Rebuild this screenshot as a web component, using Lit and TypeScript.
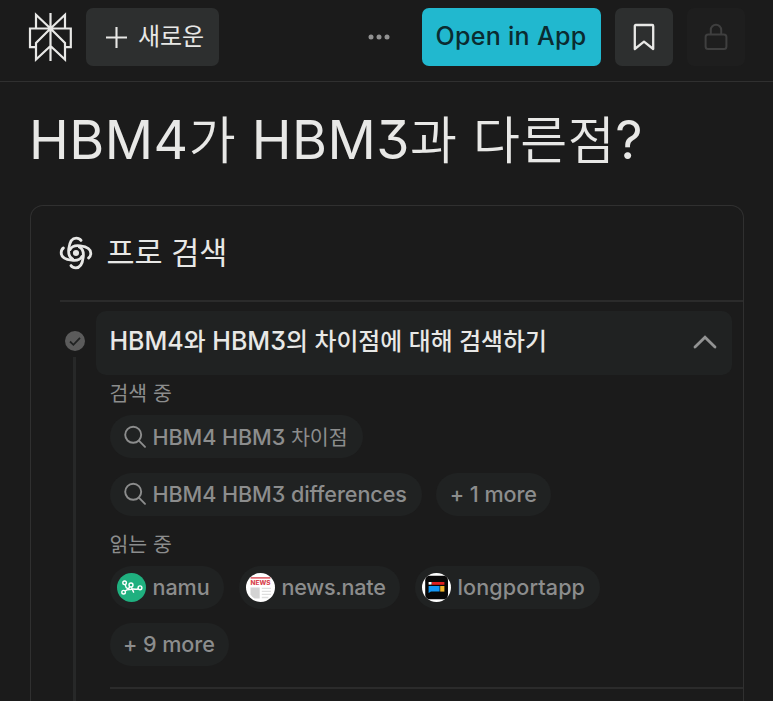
import { LitElement, html, css, svg } from "lit";
import { customElement, property } from "lit/decorators.js";

/* Splits a label into Hangul and Latin runs so each script gets its own face. */
const mix = (text: string) =>
  text
    .split(/([가-힣]+)/)
    .filter((run) => run.length > 0)
    .map((run) => html`<span class=${/[가-힣]/.test(run) ? "ko" : "la"}>${run}</span>`);

const scripts = css`
  .la {
    font-family: Inter, "Liberation Sans", sans-serif;
    letter-spacing: var(--la-gap, 0);
    font-feature-settings: "cv09" 1;
    white-space: pre;
  }
  .ko {
    font-family: "Noto Sans CJK KR", sans-serif;
    font-size: var(--ko-size, 0.95em);
    font-weight: var(--ko-weight, 400);
    letter-spacing: var(--ko-gap, 0);
  }
`;

const searchIcon = svg`<svg width="24" height="24" viewBox="0 0 24 24" fill="none" stroke="#8c8d8d" stroke-width="1.9" stroke-linecap="round">
  <circle cx="10.2" cy="9.8" r="8"/><path d="M15.9 15.6 22 21.8"/></svg>`;

const namuIcon = svg`<svg width="29" height="29" viewBox="0 0 29 29"><circle cx="14.5" cy="14.5" r="14.5" fill="#1fb07f"/>
  <g fill="none" stroke="#fff" stroke-width="1.4"><circle cx="7.6" cy="9.8" r="1.8"/><circle cx="14" cy="12" r="2"/><circle cx="6.6" cy="19.2" r="1.8"/><circle cx="23" cy="14.8" r="1.9"/>
  <path d="M8.2 11.6C9 16 11.4 16.4 12.8 13.8M8.2 18C10.4 15.4 13.2 17 15.4 16.2S19 17.4 21.2 15.6M14.4 14.2 16.8 19.6"/></g></svg>`;

const newsIcon = svg`<svg width="29" height="29" viewBox="0 0 29 29"><circle cx="14.5" cy="14.5" r="14.5" fill="#fff"/>
  <path d="M4.6 4.9H24.4" stroke="#d8454f" stroke-width="1.4"/>
  <text x="14.5" y="11.8" text-anchor="middle" textLength="20" lengthAdjust="spacingAndGlyphs" font-family="Inter, sans-serif" font-size="6.2" font-weight="800" fill="#d8454f">NEWS</text>
  <path d="M4.5 14.5H13.7V25.6H8.6Q5.8 23.6 4.5 21.4Z" fill="#d3d3d3"/>
  <path d="M15.8 15.3H25M15.8 18.3H25M15.8 21.3H25M15.8 24.5H22.4" stroke="#dedede" stroke-width="1.3"/></svg>`;

const longportIcon = svg`<svg width="29" height="29" viewBox="0 0 29 29"><circle cx="14.5" cy="14.5" r="14.5" fill="#fff"/>
  <rect x="3.2" y="2.8" width="22.8" height="23.4" rx="4.5" fill="#080808"/>
  <rect x="6.6" y="9" width="3" height="2.6" fill="#fff"/><rect x="10" y="9" width="12.4" height="2.8" fill="#e02020"/>
  <path d="M6.6 13H17.6V18.6H9L6.6 20Z" fill="#1297f5"/><rect x="18.2" y="13" width="4.2" height="5.6" fill="#f0b429"/></svg>`;

@customElement("query-pill")
class QueryPill extends LitElement {
  @property() label = "";
  @property() kind = "more";
  static styles = [
    scripts,
    css`
      :host {
        display: inline-flex;
        --ko-size: 20.6px;
        --la-gap: -0.08px;
      }
      .pill {
        display: flex;
        align-items: center;
        height: 43px;
        box-sizing: border-box;
        border-radius: 22px;
        background: #202222;
        color: #8c8d8d;
        font: 500 21.6px/43px Inter, sans-serif;
        white-space: nowrap;
      }
      .search { padding: 0 15px 0 13px; gap: 6px; }
      .source { padding: 0 14.5px 0 7px; gap: 7px; }
      .news { --la-gap: -0.28px; }
      .longport { --la-gap: 0.1px; }
      .more { padding: 0 14.5px 0 13.5px; }
      svg { display: block; flex: none; }
    `,
  ];
  render() {
    const icons: Record<string, unknown> = {
      search: searchIcon,
      namu: namuIcon,
      news: newsIcon,
      longport: longportIcon,
      more: "",
    };
    const shape = this.kind === "search" || this.kind === "more" ? "" : "source";
    return html`<div class="pill ${shape} ${this.kind}">${icons[this.kind]}<span>${mix(this.label)}</span></div>`;
  }
}

@customElement("app-root")
class AppRoot extends LitElement {
  static styles = [
    scripts,
    css`
      :host {
        display: flex;
        flex-direction: column;
        height: 701px;
        overflow: hidden;
        background: #1b1b1b;
        color: #e8e8e6;
        font-family: Inter, "Noto Sans CJK KR", sans-serif;
      }
      svg { display: block; flex: none; }
      header {
        display: flex;
        align-items: center;
        height: 82px;
        box-sizing: border-box;
        border-bottom: 1.5px solid #303030;
        padding: 0 28.5px 6.5px 28px;
        flex: none;
      }
      .btn {
        display: flex;
        align-items: center;
        justify-content: center;
        box-sizing: border-box;
        height: 58px;
        border-radius: 7px;
        background: #2d2f2f;
        white-space: nowrap;
      }
      .new {
        width: 133px;
        margin-left: 13px;
        gap: 11px;
        font-size: 24px;
        line-height: 52px;
        --ko-size: 24px;
        padding-left: 5px;
      }
      .new .ko { padding-bottom: 4px; }
      .dots { margin-left: auto; margin-right: 32px; }
      .open {
        width: 179px;
        background: #21b8cf;
        color: #0b2b30;
        font-size: 25px;
        font-weight: 500;
        padding-bottom: 3px;
        --la-gap: 0.3px;
      }
      .square { width: 58px; margin-left: 14px; }
      .muted { background: #1e1e1e; }
      h1 {
        margin: 0;
        padding-left: 29px;
        height: 123px;
        flex: none;
        font-size: 53.5px;
        font-weight: 400;
        line-height: 111px;
        white-space: nowrap;
        --ko-size: 51px;
        --ko-weight: 350;
        --la-gap: 0.5px;
        --ko-gap: 0.5px;
      }
      .card {
        margin: 0 29px 0 29.5px;
        flex: 1;
        display: flex;
        flex-direction: column;
        box-sizing: border-box;
        border: 1.5px solid #303030;
        border-bottom: 0;
        border-radius: 13px 13px 0 0;
        padding-left: 29px;
      }
      .pro {
        display: flex;
        align-items: center;
        gap: 14px;
        height: 96px;
        box-sizing: border-box;
        border-bottom: 2px solid #2b2b2b;
        font-size: 30.5px;
        line-height: 88px;
        --ko-size: 30.5px;
        padding-bottom: 1px;
      }
      .pro svg { margin-left: -1px; }
      .pro span { padding-bottom: 1px; }
      .step { display: flex; flex: 1; padding-top: 9px; }
      .rail {
        width: 30px;
        margin-right: 6px;
        display: flex;
        flex-direction: column;
        align-items: center;
        padding-top: 20px;
        box-sizing: border-box;
      }
      .line { width: 3px; flex: 1; margin-top: 6px; background: #272828; }
      .body { flex: 1; display: flex; flex-direction: column; }
      .head {
        display: flex;
        align-items: center;
        justify-content: space-between;
        height: 64px;
        margin-right: 11px;
        padding: 0 15px 0 14px;
        border-radius: 10px;
        background: #202222;
        font-size: 25px;
        font-weight: 500;
        line-height: 60px;
        white-space: nowrap;
        --ko-size: 23.8px;
        --ko-weight: 450;
      }
      .head .title { padding-bottom: 5px; }
      .head svg { margin-bottom: 3px; }
      .label {
        margin-left: 14px;
        color: #8c8d8d;
        font-size: 20.5px;
        line-height: 30px;
        --ko-size: 20.5px;
      }
      .first { padding: 2px 0 6px; }
      .second { padding: 12px 0 6px; }
      .pills {
        display: flex;
        flex-wrap: wrap;
        gap: 14.5px;
        margin-left: 14px;
        width: 520px;
      }
      .rule { margin: 21px 0 0 14px; height: 2px; background: #2b2b2b; }
    `,
  ];
  render() {
    return html`
      <header>
        <svg width="45" height="50" viewBox="0 0 45 50" fill="none" stroke="#e8e8e6" stroke-width="2.2">
          <path d="M22.5 1V49M22.5 16.5 8 2.8V16.5M22.5 16.5 37 2.8V16.5M8 35.2H2V16.5H42.8V35.2H37M22.5 16.5 8 31V47.5L22.5 34 37 47.5V31Z"/>
        </svg>
        <div class="btn new">
          <svg width="21" height="21" viewBox="0 0 21 21" stroke="#e8e8e6" stroke-width="2.1"><path d="M10.5 0V21M0 10.5H21"/></svg>
          ${mix("새로운")}
        </div>
        <svg class="dots" width="22" height="6" viewBox="0 0 22 6" fill="#929292"><circle cx="3" cy="3" r="2.5"/><circle cx="11" cy="3" r="2.5"/><circle cx="19" cy="3" r="2.5"/></svg>
        <div class="btn open">${mix("Open in App")}</div>
        <div class="btn square">
          <svg width="22" height="28" viewBox="0 0 22 28" fill="none" stroke="#e8e8e6" stroke-width="2.3" stroke-linejoin="round"><path d="M1.8 3Q1.8 2 2.8 2H19.2Q20.2 2 20.2 3V26L11 18.7 1.8 26Z"/></svg>
        </div>
        <div class="btn square muted">
          <svg width="24" height="28" viewBox="0 0 24 28" fill="none" stroke="#3f3f3f" stroke-width="2"><rect x="1.6" y="11.5" width="20.8" height="14.5" rx="2.5"/><path d="M6.8 11.5V7A5.2 5.2 0 0 1 17.2 7V11.5"/></svg>
        </div>
      </header>
      <h1>${mix("HBM4가 HBM3과 다른점?")}</h1>
      <section class="card">
        <div class="pro">
          <svg width="34" height="34" viewBox="-17 -17 34 34" fill="none" stroke="#e8e8e6" stroke-width="2.8" stroke-linecap="round">
            <circle r="3.1" fill="#e8e8e6" stroke="none"/>
            ${[0, 90, 180, 270].map((a) => svg`<path transform="rotate(${a})" d="M-3.4 6C-6.6 4.4-7.8 0.5-7.2-4.2-6.6-9.4-4.4-14.8 0.2-14.8 2.4-14.8 4-14 5-12.6"/>`)}
          </svg>
          <span>${mix("프로 검색")}</span>
        </div>
        <div class="step">
          <div class="rail">
            <svg width="20" height="20" viewBox="0 0 20 20"><circle cx="10" cy="10" r="10" fill="#5b5b5b"/><path d="M5 10.5 8.4 13.8 15 6.8" fill="none" stroke="#202222" stroke-width="1.8"/></svg>
            <div class="line"></div>
          </div>
          <div class="body">
            <div class="head">
              <span class="title">${mix("HBM4와 HBM3의 차이점에 대해 검색하기")}</span>
              <svg width="24" height="14" viewBox="0 0 24 14" fill="none" stroke="#929393" stroke-width="2.8" stroke-linecap="round"><path d="M2 12 12 2.2 22 12"/></svg>
            </div>
            <div class="label first">${mix("검색 중")}</div>
            <div class="pills">
              <query-pill kind="search" label="HBM4 HBM3 차이점"></query-pill>
              <query-pill kind="search" label="HBM4 HBM3 differences"></query-pill>
              <query-pill label="+ 1 more"></query-pill>
            </div>
            <div class="label second">${mix("읽는 중")}</div>
            <div class="pills">
              <query-pill kind="namu" label="namu"></query-pill>
              <query-pill kind="news" label="news.nate"></query-pill>
              <query-pill kind="longport" label="longportapp"></query-pill>
              <query-pill label="+ 9 more"></query-pill>
            </div>
            <div class="rule"></div>
          </div>
        </div>
      </section>
    `;
  }
}
